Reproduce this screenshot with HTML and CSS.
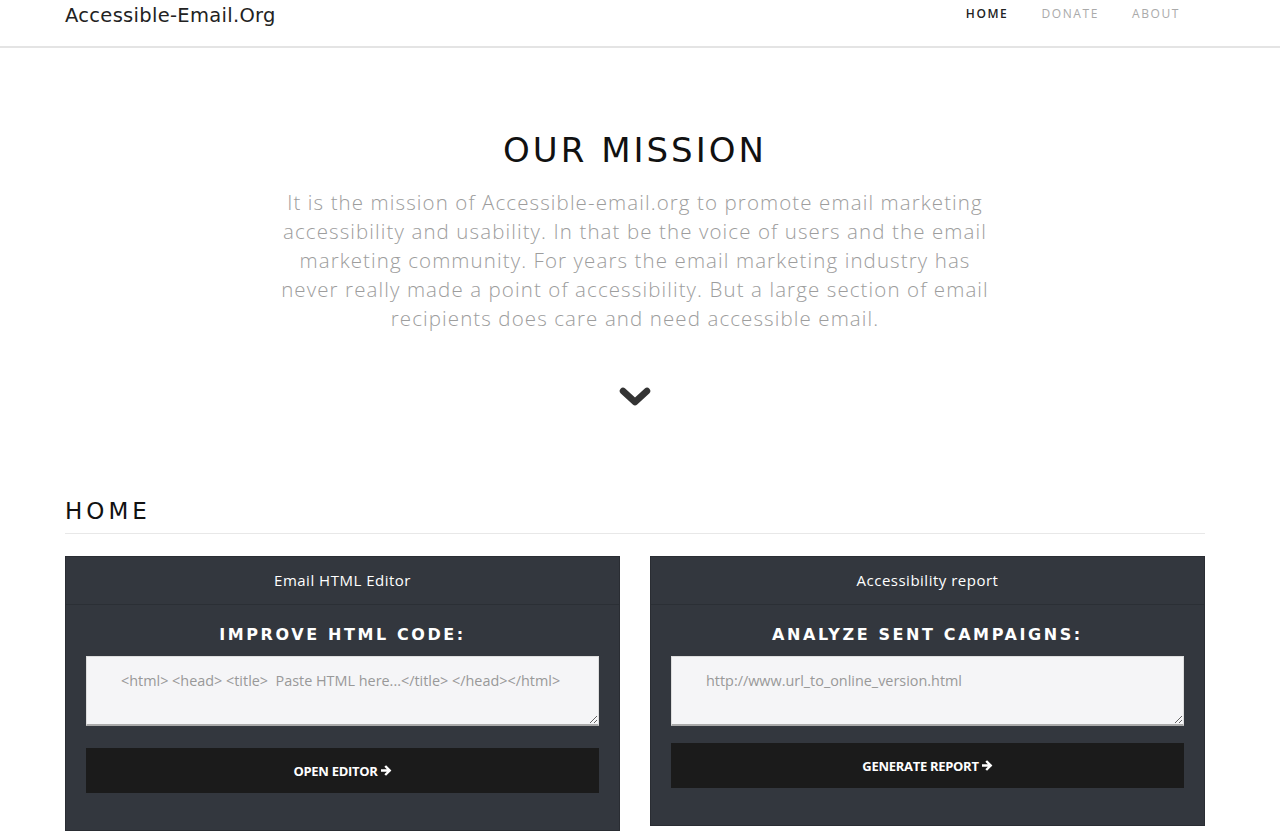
FILE: index.html
```html
<!DOCTYPE html>
<html lang="en">
<head>
    <meta charset="UTF-8">
    <title>Accessible-Email.Org</title>
    <link rel="stylesheet" href="styles.css">
</head>
<body>
    <nav class="navbar">
        <div class="container nav-inner">
            <a class="brand" href="#">Accessible-Email.Org</a>
            <ul class="nav-links">
                <li><a class="active" href="#">Home</a></li>
                <li><a href="#">Donate</a></li>
                <li><a href="#">About</a></li>
            </ul>
        </div>
    </nav>

    <header class="mission">
        <div class="container">
            <h1>Our Mission</h1>
            <p class="intro">It is the mission of Accessible-email.org to promote email marketing accessibility and usability. In that be the voice of users and the email marketing community. For years the email marketing industry has never really made a point of accessibility. But a large section of email recipients does care and need accessible email.</p>
            <a class="scroll-down" href="#home" aria-label="Scroll down">
                <svg width="32" height="22" viewBox="0 0 32 22">
                    <polyline points="4,5 16,16 28,5" fill="none" stroke="#333" stroke-width="6.5" stroke-linecap="round" stroke-linejoin="round"/>
                </svg>
            </a>
        </div>
    </header>

    <section class="home" id="home">
        <div class="container">
            <h2 class="section-title">Home</h2>
            <div class="cards">
                <div class="card">
                    <div class="card-header">Email HTML Editor</div>
                    <div class="card-body">
                        <h3>Improve HTML code:</h3>
                        <textarea class="code-input" placeholder="<html> <head> <title>  Paste HTML here...</title> </head></html>"></textarea>
                        <button class="card-btn">Open editor
                            <svg class="arrow" width="11" height="11" viewBox="0 0 12 12"><path d="M1 6h8M5.5 2l4 4-4 4" fill="none" stroke="#fff" stroke-width="2.6" stroke-linecap="square"/></svg>
                        </button>
                    </div>
                </div>
                <div class="card short">
                    <div class="card-header">Accessibility report</div>
                    <div class="card-body">
                        <h3>Analyze sent campaigns:</h3>
                        <textarea class="code-input" placeholder="http://www.url_to_online_version.html"></textarea>
                        <button class="card-btn">Generate report
                            <svg class="arrow" width="11" height="11" viewBox="0 0 12 12"><path d="M1 6h8M5.5 2l4 4-4 4" fill="none" stroke="#fff" stroke-width="2.6" stroke-linecap="square"/></svg>
                        </button>
                    </div>
                </div>
            </div>
        </div>
    </section>
</body>
</html>
```

FILE: styles.css
```css
body {
    margin: 0;
    padding-right: 10px;
    font-family: "Open Sans", sans-serif;
    color: #333;
    background: #fff;
}

.container {
    width: 1140px;
    margin: 0 auto;
}

/* navbar */
.navbar {
    height: 46px;
    margin-right: -10px;
    border-bottom: 2px solid #e4e4e4;
}

.nav-inner {
    display: flex;
    justify-content: space-between;
    align-items: flex-start;
    padding-right: 10px;
}

.brand {
    font-family: "DejaVu Sans", sans-serif;
    font-size: 19.5px;
    color: #222;
    text-decoration: none;
    line-height: 31px;
    letter-spacing: 0.3px;
}

.nav-links {
    list-style: none;
    display: flex;
    gap: 33px;
    margin: 0;
    padding: 0 25px 0 0;
}

.nav-links a {
    display: block;
    font-size: 12px;
    text-transform: uppercase;
    letter-spacing: 1.6px;
    color: #aaa;
    text-decoration: none;
    line-height: 28px;
}

.nav-links a.active {
    color: #222;
    font-weight: 600;
}

/* mission */
.mission {
    text-align: center;
    padding-top: 82px;
}

.mission h1 {
    font-family: "DejaVu Sans", sans-serif;
    font-weight: normal;
    font-size: 34px;
    letter-spacing: 3px;
    text-transform: uppercase;
    color: #111;
    margin: 0 0 18px;
}

.intro {
    width: 720px;
    margin: 0 auto;
    font-size: 20.5px;
    font-weight: 300;
    line-height: 29px;
    letter-spacing: 1.1px;
    color: #9d9d9d;
}

.scroll-down {
    display: inline-block;
    margin-top: 53px;
}

/* home section */
.home {
    padding-top: 85px;
    padding-bottom: 40px;
}

.section-title {
    font-family: "DejaVu Sans", sans-serif;
    font-weight: normal;
    font-size: 23px;
    letter-spacing: 4px;
    text-transform: uppercase;
    color: #111;
    margin: 0;
    padding-bottom: 9px;
    border-bottom: 1px solid #e8e8e8;
}

.cards {
    display: grid;
    grid-template-columns: 555px 555px;
    gap: 30px;
    margin-top: 22px;
    align-items: start;
}

.card {
    background: #33373e;
    border: 1px solid #2a2d33;
}

.card-header {
    height: 47px;
    line-height: 47px;
    text-align: center;
    color: #fff;
    font-size: 15px;
    letter-spacing: 0.5px;
    border-bottom: 1px solid #2b2f35;
}

.card-body {
    padding: 16px 20px 37px;
}

.card h3 {
    font-family: "DejaVu Sans", sans-serif;
    font-size: 16px;
    letter-spacing: 2.6px;
    text-transform: uppercase;
    text-align: center;
    color: #fff;
    margin: 4px 0 12px;
}

.code-input {
    display: block;
    box-sizing: border-box;
    width: 100%;
    height: 70px;
    padding: 14px 34px;
    background: #f5f5f7;
    border: 1px solid #ddd;
    border-bottom: 2px solid #aaa;
    font-family: "Open Sans", sans-serif;
    font-size: 14.4px;
    color: #555;
    resize: vertical;
}

.code-input::placeholder {
    color: #999;
}

.card-btn {
    display: flex;
    align-items: center;
    justify-content: center;
    gap: 3px;
    width: 100%;
    height: 45px;
    margin-top: 22px;
    background: #1b1b1b;
    border: none;
    color: #fff;
    font-family: "Open Sans", sans-serif;
    font-size: 13px;
    font-weight: 700;
    text-transform: uppercase;
    letter-spacing: -0.3px;
    cursor: pointer;
}

.card.short .card-btn {
    margin-top: 17px;
}
```
